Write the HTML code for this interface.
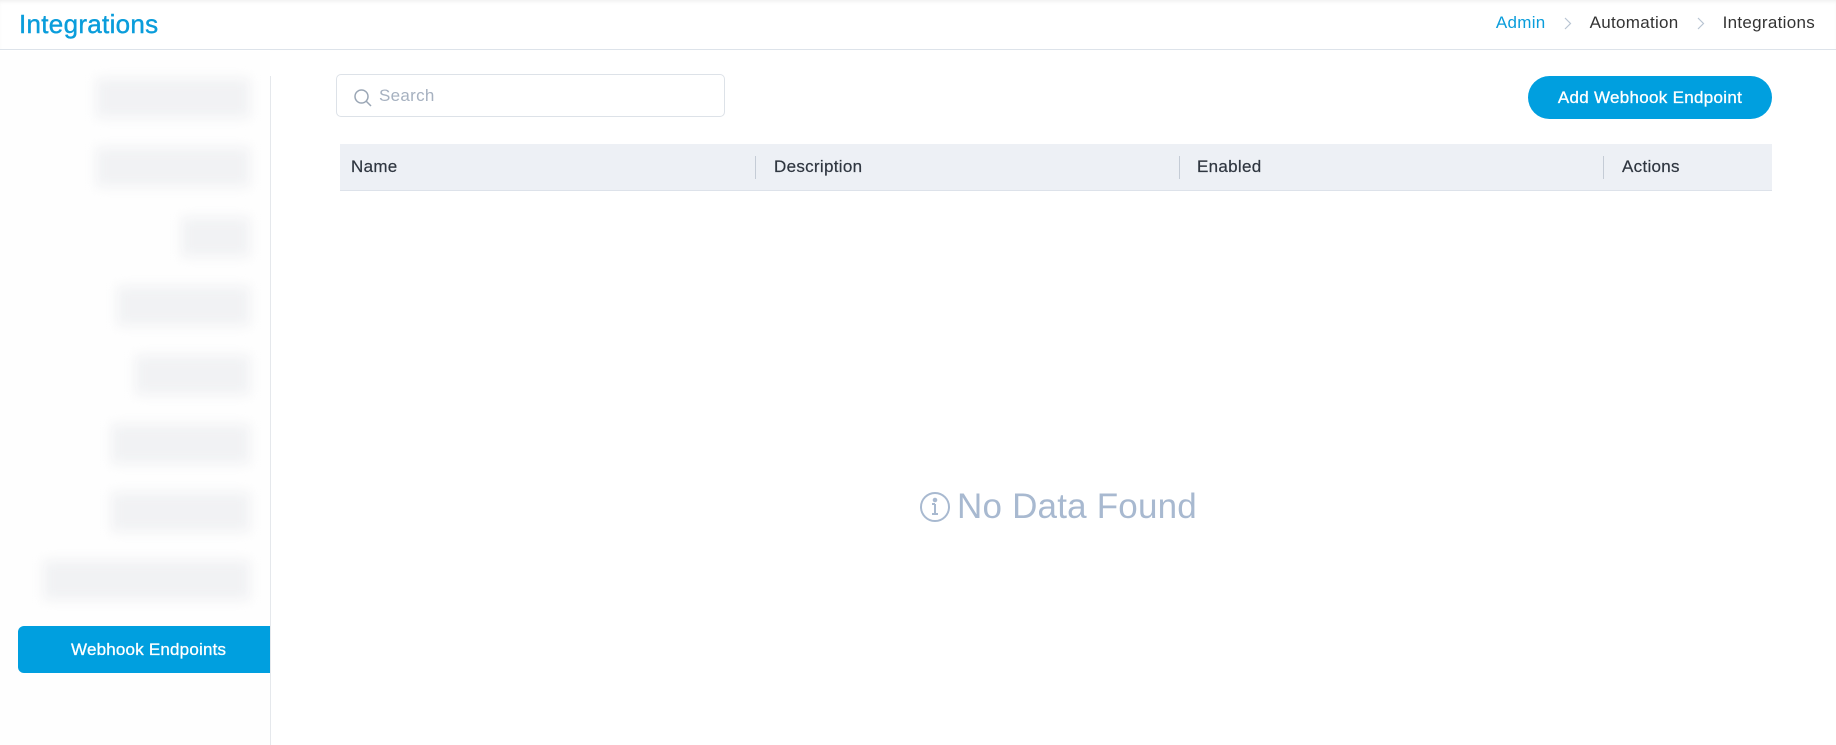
<!DOCTYPE html>
<html><head><meta charset="utf-8"><style>
*{box-sizing:border-box;margin:0;padding:0}
body{width:1836px;height:745px;overflow:hidden;background:#fff;font-family:"Liberation Sans",sans-serif;position:relative;color:#333}
.hdr{position:absolute;left:0;top:0;width:1836px;height:50px;border-bottom:1px solid #dde3ea;box-shadow:inset 0 3px 4px -2px rgba(0,0,0,.08)}
.title{position:absolute;left:19px;top:9px;font-size:26px;color:#0a9ddb;letter-spacing:0.3px;-webkit-text-stroke:0.4px #0a9ddb}
.bc{position:absolute;right:21px;top:13px;font-size:17px;color:#333;display:flex;align-items:center;letter-spacing:0.3px}
.bc .a{color:#0a9ddb}
.bc svg{margin:0 18px}
.side{position:absolute;left:0;top:51px;width:270px;height:694px;background:#fefefe}
.vl{position:absolute;left:270px;top:76px;width:1px;height:669px;background:#e5e8ec}
.blur{position:absolute;background:#f1f2f4;filter:blur(6px);height:40px;right:1586px}
.active{position:absolute;left:18px;top:626px;width:252px;height:47px;background:#009fdf;border-radius:6px 0 0 6px;color:#fff;font-size:17px;line-height:47px;padding-left:53px;letter-spacing:0.2px;-webkit-text-stroke:0.3px #fff}
.search{position:absolute;left:336px;top:74px;width:389px;height:43px;border:1px solid #dde2e8;border-radius:5px}
.search span{position:absolute;left:42px;top:11px;font-size:17px;color:#a6b1c0;letter-spacing:0.3px}
.btn{position:absolute;left:1528px;top:76px;width:244px;height:43px;border-radius:22px;background:#009fdf;color:#fff;font-size:17px;text-align:center;line-height:43px;letter-spacing:0.3px;-webkit-text-stroke:0.3px #fff}
.th{position:absolute;left:340px;top:144px;width:1432px;height:47px;background:#edf0f5;border-bottom:1px solid #dde2ea;font-size:17px;color:#2f3640;letter-spacing:0.3px;-webkit-text-stroke:0.2px #2f3640}
.th span{position:absolute;top:13px}
.th i{position:absolute;top:12px;width:1px;height:23px;background:#c5ccd6}
.nd{position:absolute;left:919px;top:487px;font-size:35px;color:#a8b9d0;display:flex;align-items:center;gap:6px;letter-spacing:0.2px}
</style></head><body>
<div class="hdr"><div class="title">Integrations</div>
<div class="bc"><span class="a">Admin</span><svg width="8" height="13" viewBox="0 0 8 13" fill="none" stroke="#b8c4d2" stroke-width="1.2"><path d="M1 1l5.5 5.5L1 12"/></svg><span>Automation</span><svg width="8" height="13" viewBox="0 0 8 13" fill="none" stroke="#b8c4d2" stroke-width="1.2"><path d="M1 1l5.5 5.5L1 12"/></svg><span>Integrations</span></div></div>
<div class="side"></div>
<div class="blur" style="top:78px;left:96px"></div>
<div class="blur" style="top:147px;left:96px"></div>
<div class="blur" style="top:217px;left:181px"></div>
<div class="blur" style="top:286px;left:117px"></div>
<div class="blur" style="top:355px;left:135px"></div>
<div class="blur" style="top:424px;left:111px"></div>
<div class="blur" style="top:492px;left:111px"></div>
<div class="blur" style="top:560px;left:43px"></div>
<div class="vl"></div>
<div class="active">Webhook Endpoints</div>
<div class="search"><svg style="position:absolute;left:16px;top:13px" width="20" height="20" viewBox="0 0 20 20" fill="none" stroke="#9aa6b5" stroke-width="1.5"><circle cx="8.5" cy="8.5" r="6.5"/><path d="M13 13l5 5"/></svg><span>Search</span></div>
<div class="btn">Add Webhook Endpoint</div>
<div class="th"><span style="left:11px">Name</span><i style="left:415px"></i><span style="left:434px">Description</span><i style="left:839px"></i><span style="left:857px">Enabled</span><i style="left:1263px"></i><span style="left:1282px">Actions</span></div>
<div class="nd"><svg width="32" height="32" viewBox="0 0 32 32" fill="none" stroke="#a8b9d0" stroke-width="2"><circle cx="16" cy="16" r="14"/><path d="M16 13v10M13 23h6M13 13h3"/><circle cx="16" cy="9" r="1.3" fill="#a8b9d0"/></svg><span>No Data Found</span></div>
</body></html>
